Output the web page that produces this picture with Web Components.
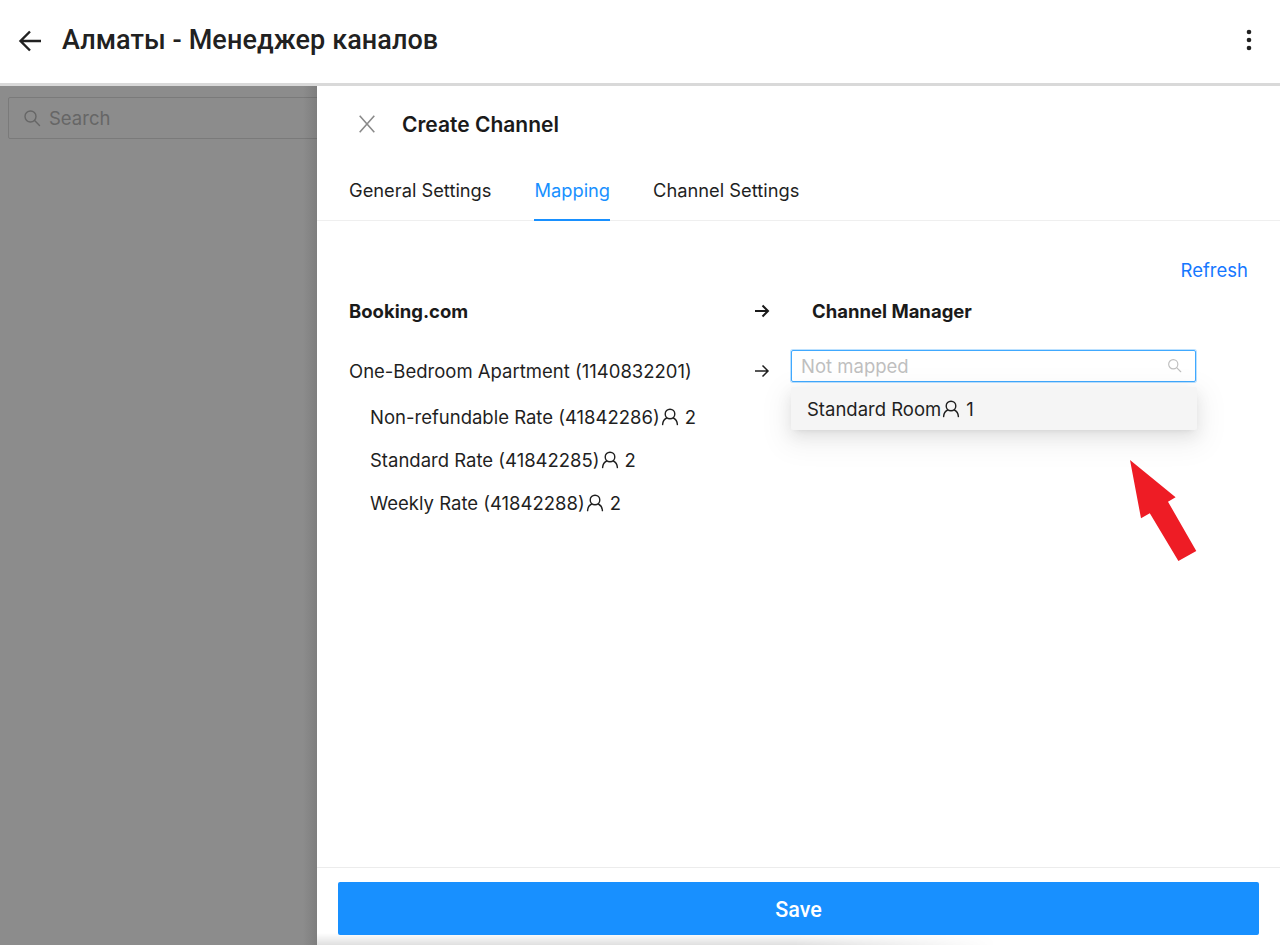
<!DOCTYPE html>
<html>
<head>
<meta charset="utf-8">
<style>
html, body { margin: 0; height: 100%; background: #fff; }
body { font-family: Inter, "Liberation Sans", sans-serif; color: #1f1f1f; overflow: hidden; }
</style>
</head>
<body>
<app-shell>
  <top-bar slot="top" title="Алматы - Менеджер каналов"></top-bar>
  <search-pane slot="side"></search-pane>
  <channel-drawer slot="main"></channel-drawer>
</app-shell>

<script>
const PERSON = `<svg width="18" height="18" viewBox="0 0 18 18" fill="none" stroke="currentColor" stroke-width="1.4" stroke-linecap="round"><circle cx="9" cy="6" r="4.800"/><path d="M5.600 10C3.200 11.200 1.800 13.600 1.600 16.600M12.400 10C14.800 11.200 16.200 13.600 16.400 16.600"/></svg>`;
const LENS = `<svg viewBox="0 0 18 18" fill="none" stroke="currentColor" stroke-width="1.400" stroke-linecap="round"><circle cx="7.500" cy="7.500" r="5.500"/><path d="M11.600 11.600l4.900 4.900"/></svg>`;

class AppShell extends HTMLElement {
    connectedCallback() {
        this.attachShadow({mode: 'open'});
        this.shadowRoot.innerHTML = `
      <style>
:host {
  display: flex;
  flex-direction: column;
  height: 945px;
  overflow: hidden;
}
.body {
  flex: 1;
  display: flex;
  min-height: 0;
}
.side {
  width: 317px;
  flex: none;
  overflow: hidden;
  background: #8c8c8c;
  position: relative;
}
.side::after {
  content: "";
  position: absolute;
  top: 0;
  bottom: 0;
  right: 0;
  width: 14px;
  background: linear-gradient(to right, rgba(0,0,0,0), rgba(0,0,0,.1));
}
.main {
  flex: 1;
  min-width: 0;
  display: flex;
}
      </style>
      <slot name="top"></slot>
      <div class="body">
        <div class="side"><slot name="side"></slot></div>
        <div class="main"><slot name="main"></slot></div>
      </div>
    `;
    }
}

class TopBar extends HTMLElement {
    connectedCallback() {
        this.attachShadow({mode: 'open'});
        this.shadowRoot.innerHTML = `
      <style>
:host {
  display: flex;
  align-items: center;
  height: 83px;
  flex: none;
  padding: 0 18px;
  background: #fff;
  border-bottom: 3px solid #d9d9d9;
  font-family: Roboto, sans-serif;
}
svg { display: block; flex: none; }
h1 {
  flex: 1;
  margin: 0 0 3px 20px;
  font-size: 27px;
  line-height: 32px;
  font-weight: 500;
  color: #212121;
  letter-spacing: .08px;
}
      </style>
      <svg width="24" height="24" viewBox="0 0 24 24" fill="none" stroke="#212121" stroke-width="2.400" style="margin-bottom:1px"><path d="M23 12H2.500M12 2.500L2.500 12l9.500 9.500"/></svg>
      <h1>${this.getAttribute('title')}</h1>
      <svg width="24" height="24" viewBox="0 0 24 24" fill="#212121" style="margin:0 1px 3px 0"><circle cx="12" cy="4" r="2.300"/><circle cx="12" cy="12" r="2.300"/><circle cx="12" cy="20" r="2.300"/></svg>
    `;
    }
}

class SearchPane extends HTMLElement {
    connectedCallback() {
        this.attachShadow({mode: 'open'});
        this.shadowRoot.innerHTML = `
      <style>
:host {
  display: block;
  padding: 11px 0 0 8px;
}
.box {
  width: 400px;
  height: 42px;
  box-sizing: border-box;
  display: flex;
  align-items: center;
  gap: 8px;
  padding-left: 14px;
  border: 1px solid #7a7a7a;
  border-radius: 2px;
  color: #666;
  font-size: 18.500px;
}
svg { width: 18px; height: 18px; }
      </style>
      <div class="box">${LENS}<span>Search</span></div>
    `;
    }
}

class ChannelDrawer extends HTMLElement {
    connectedCallback() {
        this.attachShadow({mode: 'open'});
        this.shadowRoot.innerHTML = `
      <style>
:host {
  flex: 1;
  display: flex;
  flex-direction: column;
  min-width: 0;
  position: relative;
  background: #fff;
  font-size: 18.500px;
  color: #1f1f1f;
}
.head {
  height: 76px;
  flex: none;
  display: flex;
  align-items: center;
  padding-left: 41px;
  gap: 26px;
}
.head svg { display: block; }
.head h2 {
  margin: 0;
  font-size: 21px;
  font-weight: 600;
  color: #1a1a1a;
}
.content {
  flex: 1;
  min-height: 0;
}
.foot {
  flex: none;
  height: 78px;
  box-sizing: border-box;
  border-top: 1px solid #ececec;
  padding: 14px 21px 0;
  position: relative;
}
.foot::before {
  content: "";
  position: absolute;
  left: 0;
  bottom: 0;
  width: 680px;
  height: 12px;
  background: linear-gradient(to bottom, rgba(0,0,0,0), rgba(0,0,0,.12));
  -webkit-mask-image: linear-gradient(to right, #000 70%, transparent);
  mask-image: linear-gradient(to right, #000 70%, transparent);
}
button {
  display: block;
  position: relative;
  width: 100%;
  height: 53px;
  padding: 2px 0 0;
  border: 0;
  border-radius: 2px;
  background: #1890ff;
  color: #fff;
  font: 500 21.500px Roboto, sans-serif;
}
.arrow {
  position: absolute;
  left: 811px;
  top: 374px;
}
      </style>
      <div class="head">
        <svg width="18" height="18" viewBox="0 0 18 18" fill="none" stroke="#8a8a8a" stroke-width="1.600"><path d="M1.700 .8l14.600 16.400M16.300 .8L1.700 17.200"/></svg>
        <h2>Create Channel</h2>
      </div>
      <tab-strip active="Mapping" tabs="General Settings|Mapping|Channel Settings"></tab-strip>
      <div class="content"><mapping-table></mapping-table></div>
      <div class="foot"><button>Save</button></div>
      <svg class="arrow" width="70" height="102" viewBox="0 0 70 102"><polygon fill="#ee1c25" points="2,0 47.600,37.300 40,41.700 68.300,91 50.400,101 21.800,53.300 13,58.300"/></svg>
    `;
    }
}

class TabStrip extends HTMLElement {
    connectedCallback() {
        this.attachShadow({mode: 'open'});
        const active = this.getAttribute('active');
        const tabs = this.getAttribute('tabs').split('|').map(t =>
            `<div class="tab${t === active ? ' on' : ''}">${t}</div>`).join('');
        this.shadowRoot.innerHTML = `
      <style>
:host {
  display: flex;
  flex: none;
  gap: 43px;
  height: 59px;
  padding-left: 32px;
  border-bottom: 1px solid #efefef;
  box-sizing: border-box;
  font-size: 18.300px;
}
.tab {
  line-height: 57px;
  height: 59px;
  box-sizing: border-box;
}
.on {
  color: #1890ff;
  border-bottom: 2px solid #1890ff;
}
      </style>
      ${tabs}
    `;
    }
}

class MappingTable extends HTMLElement {
    connectedCallback() {
        this.attachShadow({mode: 'open'});
        this.shadowRoot.innerHTML = `
      <style>
:host {
  display: block;
  position: relative;
  padding: 0 32px 0 32px;
}
.refresh {
  text-align: right;
  color: #1677ff;
  line-height: 24px;
  padding-top: 37px;
  margin-bottom: 17px;
}
.row {
  display: grid;
  grid-template-columns: 405px 37px 1fr;
  align-items: center;
}
.head { font-weight: 700; color: #1a1a1a; line-height: 24px; margin-bottom: 36px; }
.head .right { padding-left: 21px; }
.arrow { display: block; }
.picker {
  position: relative;
  height: 32px;
  width: 405px;
  margin-top: -11px;
  box-sizing: border-box;
  border: 1px solid #40a9ff;
  box-shadow: 0 0 0 1px rgba(64,169,255,.35);
  border-radius: 2px;
  display: flex;
  align-items: center;
  justify-content: space-between;
  padding: 0 13px 0 9px;
  color: #bfbfbf;
}
.picker svg { width: 15px; height: 15px; display: block; }
.menu {
  position: absolute;
  left: -1px;
  top: 36px;
  width: 406px;
  height: 43px;
  box-sizing: border-box;
  padding: 2px 16px 0;
  display: flex;
  align-items: center;
  background: #f5f5f5;
  color: #1f1f1f;
  border-radius: 2px;
  box-shadow: 0 3px 6px -4px rgba(0,0,0,.12), 0 6px 16px rgba(0,0,0,.08), 0 9px 28px 8px rgba(0,0,0,.05);
}
.menu svg { width: 18px; height: 18px; }
.subs {
  padding-left: 21px;
  margin-top: 13px;
}
.subs div {
  height: 43px;
  line-height: 43px;
}
.pers { display: inline-flex; vertical-align: -2px; margin: 0 6px 0 1px; }
.line { line-height: 24px; }
      </style>
      <div class="refresh">Refresh</div>
      <div class="row head">
        <div>Booking.com</div>
        <svg class="arrow" width="16" height="14" viewBox="0 0 16 14" fill="none" stroke="#1a1a1a" stroke-width="2"><path d="M1 7h13M8.500 1.500L14 7l-5.500 5.500"/></svg>
        <div class="right">Channel Manager</div>
      </div>
      <div class="row">
        <div class="line">One-Bedroom Apartment (1140832201)</div>
        <svg class="arrow" width="16" height="14" viewBox="0 0 16 14" fill="none" stroke="#1f1f1f" stroke-width="1.500"><path d="M1 7h13M8.500 1.500L14 7l-5.500 5.500"/></svg>
        <div class="picker">
          <span>Not mapped</span>${LENS}
          <div class="menu"><span>Standard Room</span><span class="pers">${PERSON}</span><span>1</span></div>
        </div>
      </div>
      <div class="subs">
        <div>Non-refundable Rate (41842286)<span class="pers">${PERSON}</span>2</div>
        <div>Standard Rate (41842285)<span class="pers">${PERSON}</span>2</div>
        <div>Weekly Rate (41842288)<span class="pers">${PERSON}</span>2</div>
      </div>
    `;
    }
}

customElements.define('app-shell', AppShell);
customElements.define('top-bar', TopBar);
customElements.define('search-pane', SearchPane);
customElements.define('tab-strip', TabStrip);
customElements.define('mapping-table', MappingTable);
customElements.define('channel-drawer', ChannelDrawer);
</script>
</body>
</html>
